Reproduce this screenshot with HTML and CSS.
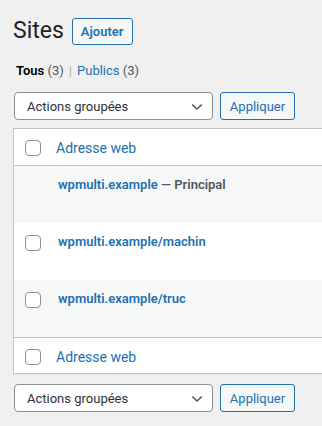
FILE: index.html
```html
<!DOCTYPE html>
<html lang="fr">
<head>
<meta charset="utf-8">
<title>Sites</title>
<link rel="stylesheet" href="styles.css">
</head>
<body>
<div class="wrap">
  <div class="head">
    <h1 class="title">Sites</h1>
    <a class="add-btn" href="#">Ajouter</a>
  </div>
  <ul class="subsubsub">
    <li><a class="current" href="#">Tous <span class="count">(3)</span></a></li>
    <li class="sep">|</li>
    <li><a href="#">Publics <span class="count">(3)</span></a></li>
  </ul>
  <div class="tablenav">
    <div class="select"><span>Actions groupées</span>
      <svg class="chev" width="12" height="8" viewBox="0 0 12 8"><path d="M1.2 1.5 L6 6 L10.8 1.5" fill="none" stroke="#50575e" stroke-width="1.6"/></svg>
    </div>
    <button class="btn">Appliquer</button>
  </div>
  <div class="table">
    <div class="row thead">
      <span class="cb"></span>
      <a class="col-link" href="#">Adresse web</a>
    </div>
    <div class="row item alt">
      <span class="cb-empty"></span>
      <div class="col-title"><a href="#">wpmulti.example</a> <span class="state">— Principal</span></div>
    </div>
    <div class="row item">
      <span class="cb"></span>
      <div class="col-title"><a href="#">wpmulti.example/machin</a></div>
    </div>
    <div class="row item alt">
      <span class="cb"></span>
      <div class="col-title"><a href="#">wpmulti.example/truc</a></div>
    </div>
    <div class="row tfoot">
      <span class="cb"></span>
      <a class="col-link" href="#">Adresse web</a>
    </div>
  </div>
  <div class="tablenav bottom">
    <div class="select"><span>Actions groupées</span>
      <svg class="chev" width="12" height="8" viewBox="0 0 12 8"><path d="M1.2 1.5 L6 6 L10.8 1.5" fill="none" stroke="#50575e" stroke-width="1.6"/></svg>
    </div>
    <button class="btn">Appliquer</button>
  </div>
</div>
</body>
</html>
```
FILE: styles.css
```css
html, body {
  margin: 0;
  padding: 0;
  overflow: hidden;
}
body {
  background: #f0f0f1;
  font-family: Roboto, "Liberation Sans", sans-serif;
  color: #3c434a;
  width: 322px;
  height: 426px;
}
a { text-decoration: none; color: #2271b1; }
.wrap {
  padding-left: 13px;
}
.head {
  display: flex;
  align-items: center;
  margin-top: 16px;
  height: 30px;
}
.title {
  margin: 0;
  font-size: 23px;
  font-weight: 400;
  line-height: 30px;
  color: #1d2327;
}
.add-btn {
  margin-left: 8px;
  box-sizing: border-box;
  height: 27px;
  padding: 0 8px;
  display: flex;
  align-items: center;
  border: 1px solid #2271b1;
  border-radius: 3px;
  background: #f6f7f7;
  color: #2271b1;
  font-size: 13px;
  font-weight: 600;
}
.subsubsub {
  list-style: none;
  margin: 15px 0 0;
  padding: 0 0 0 3px;
  display: flex;
  font-size: 13px;
  line-height: 20px;
  height: 20px;
  color: #50575e;
}
.subsubsub a.current { color: #000; font-weight: 600; }
.subsubsub .count { color: #50575e; font-weight: 400; }
.subsubsub .sep { padding: 0 5px; color: #a7aaad; }
.tablenav {
  display: flex;
  margin-top: 11px;
  padding-left: 1px;
  gap: 7px;
}
.tablenav.bottom { margin-top: 10px; }
.select {
  box-sizing: border-box;
  width: 199px;
  height: 28px;
  border: 1px solid #8c8f94;
  border-radius: 4px;
  background: #fff;
  display: flex;
  align-items: center;
  justify-content: space-between;
  padding: 0 9px 0 12px;
  font-size: 13px;
  color: #2c3338;
}
.chev { margin-top: 1px; }
.btn {
  box-sizing: border-box;
  height: 28px;
  width: 75px;
  padding: 0;
  border: 1px solid #2271b1;
  border-radius: 3px;
  background: #f6f7f7;
  color: #2271b1;
  font-family: inherit;
  font-size: 13px;
}
.table {
  margin-top: 8px;
  width: 420px;
  border: 1px solid #c3c4c7;
  background: #fff;
  box-shadow: 0 1px 1px rgba(0,0,0,.04);
}
.row {
  display: flex;
  align-items: flex-start;
}
.cb, .cb-empty {
  flex: none;
  width: 16px;
  height: 16px;
  box-sizing: border-box;
  margin-left: 11px;
}
.cb {
  border: 1px solid #8c8f94;
  border-radius: 4px;
  background: #fff;
}
.thead {
  height: 36px;
  border-bottom: 1px solid #c3c4c7;
}
.tfoot {
  height: 35px;
  border-top: 1px solid #c3c4c7;
}
.thead .cb, .tfoot .cb { margin-top: 11px; }
.col-link {
  margin-left: 15px;
  margin-top: 9px;
  font-size: 14px;
  line-height: 20px;
}
.item { height: 57px; }
.item.alt { background: #f6f7f7; }
.item .cb { margin-top: 12px; }
.col-title {
  margin-left: 17px;
  margin-top: 8px;
  font-size: 13px;
  line-height: 21px;
  font-weight: 600;
}
.col-title a { color: #2271b1; }
.state { color: #50575e; }
```
